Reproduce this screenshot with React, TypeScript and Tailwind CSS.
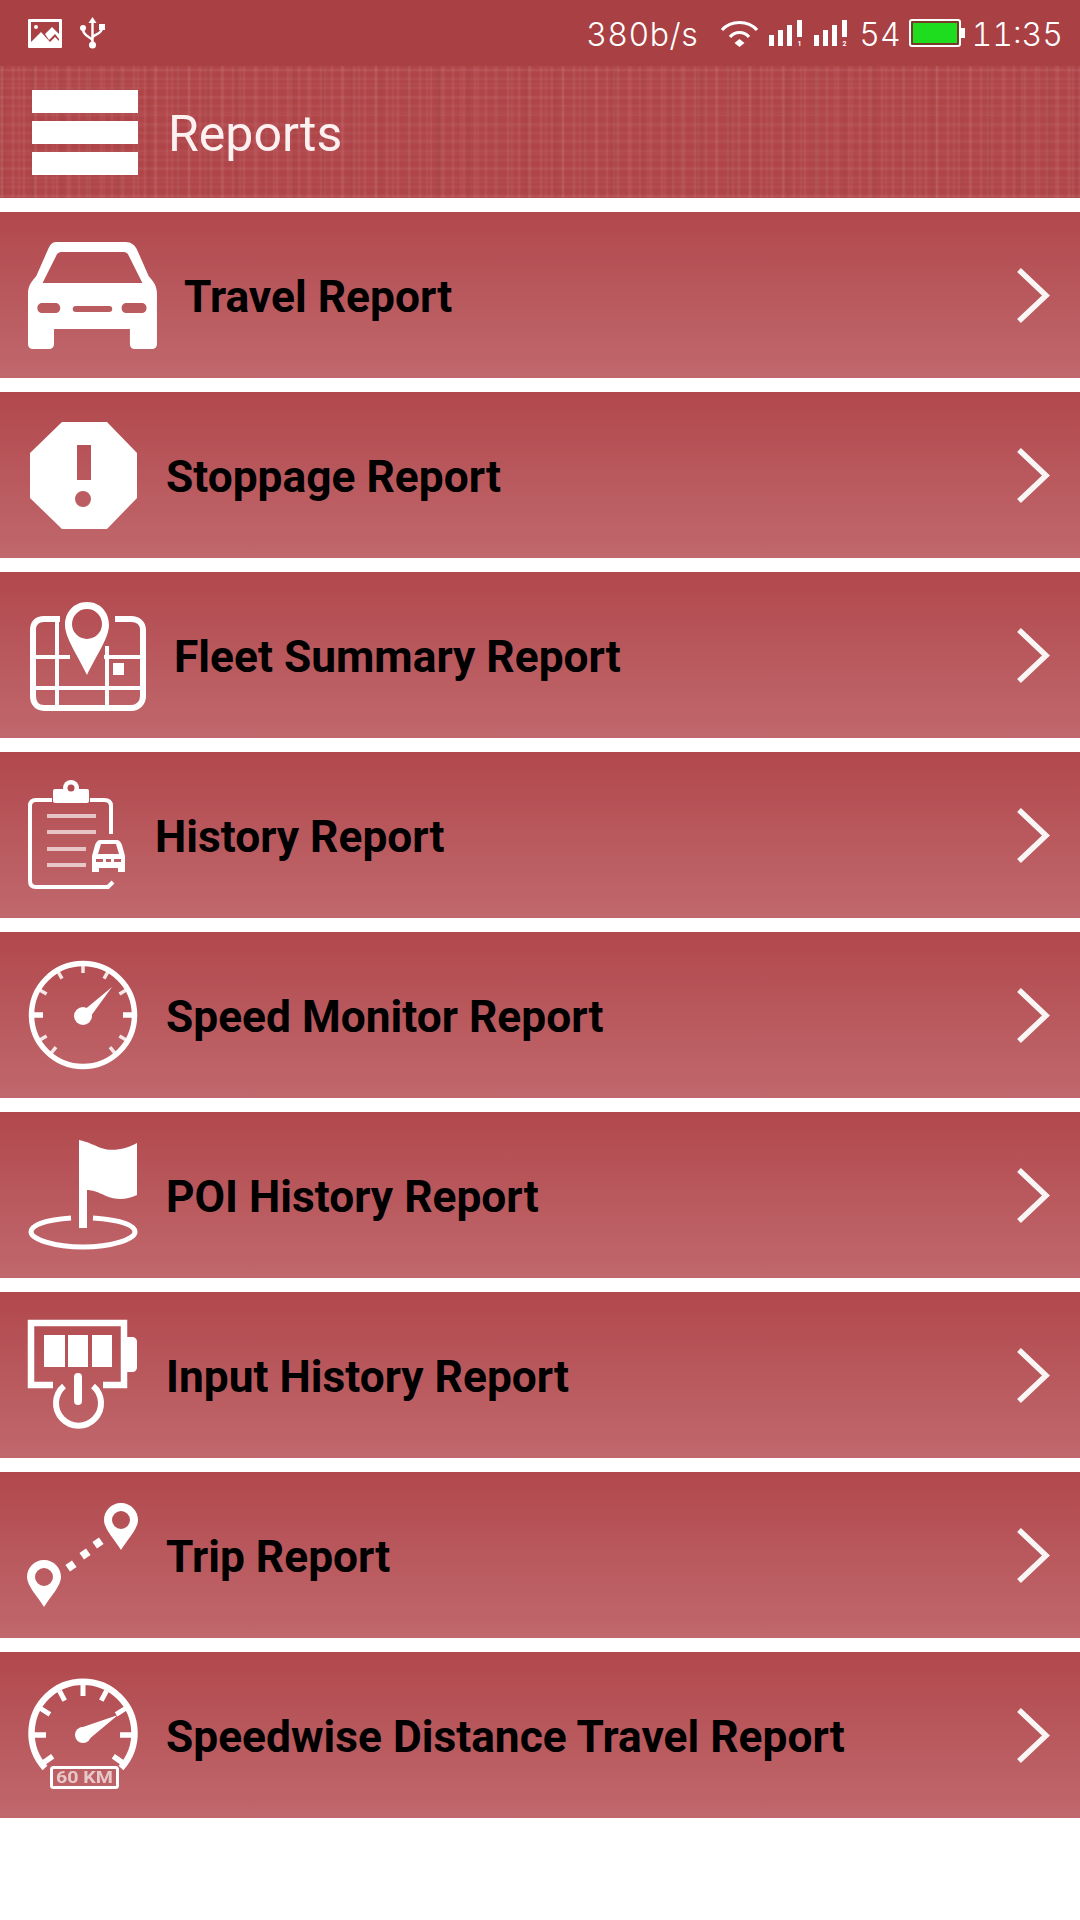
import React from 'react';

const Car = () => (
  <path
    transform="scale(1.04 1)"
    fillRule="evenodd"
    d="M27 2H94C99 2 103 5 105 10L116 36C121 42 124 46 124 54V104C124 107 122 109 119 109H103C100 109 98 107 98 104V89H25V104C25 107 23 109 20 109H5C2 109 0 107 0 104V54C0 46 3 42 8 36L19 10C21 5 23 2 27 2ZM32 12C30 12 28 13 27 16L14 43H110L97 16C96 13 94 12 92 12ZM14 63C11 63 9 65 9 68C9 71 11 73 14 73H26C29 73 31 71 31 68C31 65 29 63 26 63ZM46 66C44 66 43 67 43 69C43 71 44 72 46 72H78C80 72 81 71 81 69C81 67 80 66 78 66ZM95 63C92 63 90 65 90 68C90 71 92 73 95 73H109C112 73 114 71 114 68C114 65 112 63 109 63Z"
    fill="#fff"
  />
);

const Stop = () => (
  <path
    fillRule="evenodd"
    d="M34 2H79L109 33V78L79 109H34L2 78V33ZM49 25V60H63V25ZM55 71A8 8 0 1 0 55 87A8 8 0 1 0 55 71Z"
    fill="#fff"
  />
);

const FleetMap = () => (
  <g fill="none" stroke="#fff" strokeWidth="4">
    <path d="M32 19H16C9 19 5 23 5 30V96C5 103 9 108 16 108H103C110 108 115 103 115 96V30C115 23 110 19 103 19H87" strokeWidth="6" />
    <path d="M5 57H42M76 57H115M4 88H116M29 19V108M79 46V108" />
    <rect x="85" y="63" width="11" height="12" fill="#fff" stroke="none" />
    <path
      fillRule="evenodd"
      d="M59 2C45 2 37 13 37 25C37 38 50 56 59 75C68 56 81 38 81 25C81 13 73 2 59 2ZM59 9A15 15 0 1 1 59 39A15 15 0 1 1 59 9Z"
      fill="#fff"
      stroke="none"
    />
  </g>
);

const Clipboard = () => (
  <g fill="none" stroke="#fff">
    <path d="M24 20H8C4 20 2 22 2 26V101C2 105 4 107 8 107H80L85 102M62 20H76C81 20 83 22 83 26V54" strokeWidth="4" />
    <path d="M19 36H68M19 52H68M19 69H58M19 85H58" strokeWidth="4" opacity="0.65" />
    <rect x="25" y="9" width="36" height="14" rx="2" fill="#fff" stroke="none" />
    <circle cx="43" cy="8" r="8" fill="#fff" stroke="none" />
    <circle cx="43" cy="8" r="3.5" fill="#b24a4f" stroke="none" />
    <path
      fillRule="evenodd"
      d="M72 60H89C91 60 93 62 94 65L97 76V92H90V88H71V92H64V76L67 65C68 62 70 60 72 60ZM73 64L70 74H91L88 64ZM68 79V82H75V79ZM78 79V82H83V79ZM86 79V82H93V79Z"
      fill="#fff"
      stroke="none"
    />
  </g>
);

// tick marks round a gauge, angles in degrees clockwise from the top
const ticks = (cx: number, cy: number, r1: number, r2: number, angles: number[]) =>
  angles
    .map((a) => {
      const t = (a * Math.PI) / 180;
      const x1 = cx + Math.sin(t) * r1;
      const y1 = cy - Math.cos(t) * r1;
      const x2 = cx + Math.sin(t) * r2;
      const y2 = cy - Math.cos(t) * r2;
      return `M${x1.toFixed(1)} ${y1.toFixed(1)}L${x2.toFixed(1)} ${y2.toFixed(1)}`;
    })
    .join('');

const Gauge = () => (
  <g fill="none" stroke="#fff">
    <circle cx="55" cy="55" r="51.5" strokeWidth="5.5" />
    <path d={ticks(55, 55, 50, 40, [-90, 90])} strokeWidth="5.5" />
    <path d={ticks(55, 55, 50, 42, [0, -30, -60, 60, 30, -120, 120, -140, 140])} strokeWidth="3.5" opacity="0.85" />
    <circle cx="55" cy="56" r="9" fill="#fff" stroke="none" />
    <path d="M55 51L84 27L60 60Z" fill="#fff" stroke="none" />
  </g>
);

const Flag = () => (
  <g fill="#fff">
    <path d="M51 0C60 2 66 5 73 8C85 12 98 9 109 3V55C98 60 88 60 78 56C70 52 64 50 59 50V88H51Z" />
    <path d="M43 78C17 80 3 85 3 92C3 99 26 107 55 107C84 107 107 99 107 92C107 85 93 80 65 78" fill="none" stroke="#fff" strokeWidth="5" />
  </g>
);

const BatteryPower = () => (
  <g fill="none" stroke="#fff">
    <path d="M25 65H3V3H96V65H75" strokeWidth="6.5" />
    <path d="M99 17H104C107 17 109 19 109 22V47C109 50 107 52 104 52H99Z" fill="#fff" stroke="none" />
    <path d="M16 15H37V47H16ZM40 15H60V47H40ZM64 15H84V47H64Z" fill="#fff" stroke="none" />
    <path d="M36 66A22.5 22.5 0 1 0 65 66" strokeWidth="6" />
    <path d="M50 57V81" strokeWidth="8" strokeLinecap="round" />
  </g>
);

const pin = (x: number, y: number) =>
  `M${x} ${y}C${x - 10} ${y} ${x - 17} ${y + 8} ${x - 17} ${y + 17}C${x - 17} ${y + 26} ${x - 6} ${y + 37} ${x} ${y + 47}C${x + 6} ${y + 37} ${x + 17} ${y + 26} ${x + 17} ${y + 17}C${x + 17} ${y + 8} ${x + 10} ${y} ${x} ${y}ZM${x} ${y + 8}A9 9 0 1 0 ${x} ${y + 26}A9 9 0 1 0 ${x} ${y + 8}Z`;

const Trip = () => (
  <g fill="#fff">
    <path fillRule="evenodd" d={pin(93, 3)} />
    <path fillRule="evenodd" d={pin(16, 60)} />
    <rect x="39" y="62" width="8" height="8" transform="rotate(-35 43 66)" />
    <rect x="53" y="50" width="8" height="8" transform="rotate(-35 57 54)" />
    <rect x="66" y="39" width="8" height="8" transform="rotate(-35 70 43)" />
  </g>
);

const SpeedDistance = () => (
  <g fill="none" stroke="#fff">
    <path d="M17 88A51.5 51.5 0 1 1 93 88" strokeWidth="6.5" />
    <path d={ticks(55, 55, 50, 37, [-90, 90, -125, 125])} strokeWidth="5.5" />
    <path d={ticks(55, 55, 50, 39, [0, -28, 28, -58, 58])} strokeWidth="5" />
    <circle cx="55" cy="55" r="8" fill="#fff" stroke="none" />
    <path d="M52 48L90 35L60 60Z" fill="#fff" stroke="none" />
    <rect x="23.5" y="87.5" width="66" height="20" rx="2" strokeWidth="3" />
    <text x="28" y="103" textLength="57" lengthAdjust="spacingAndGlyphs" fontSize="17" fontWeight="700" fill="#fff" stroke="none" opacity="0.65" fontFamily="Roboto, sans-serif">
      60 KM
    </text>
  </g>
);

const reports = [
  { label: 'Travel Report', icon: <Car />, gap: 'ml-[31px]' },
  { label: 'Stoppage Report', icon: <Stop />, gap: 'ml-[13px]' },
  { label: 'Fleet Summary Report', icon: <FleetMap />, gap: 'ml-[21px]' },
  { label: 'History Report', icon: <Clipboard />, gap: 'ml-[2px]' },
  { label: 'Speed Monitor Report', icon: <Gauge />, gap: 'ml-[13px]' },
  { label: 'POI History Report', icon: <Flag />, gap: 'ml-[13px]' },
  { label: 'Input History Report', icon: <BatteryPower />, gap: 'ml-[13px]' },
  { label: 'Trip Report', icon: <Trip />, gap: 'ml-[13px]' },
  { label: 'Speedwise Distance Travel Report', icon: <SpeedDistance />, gap: 'ml-[13px]' },
];

const Signal = ({ sim }: { sim: string }) => (
  <svg width="34" height="27" viewBox="0 0 34 27" fill="#fff">
    <rect x="0" y="15" width="5" height="11" />
    <rect x="9" y="10" width="5" height="16" />
    <rect x="18" y="5" width="5" height="21" />
    <rect x="28" y="0" width="5" height="17" />
    <text x="30.5" y="26" textAnchor="middle" fontSize="7" fontWeight="700" fontFamily="Roboto, sans-serif">
      {sim}
    </text>
  </svg>
);

const StatusBar = () => (
  <div className="h-[66px] bg-[#a84044] flex items-center justify-between pl-[28px] pr-[17px] text-white text-[32px] tabular-nums font-['Inter',sans-serif] font-light">
    <div className="flex items-center gap-[18px]">
      <svg width="34" height="29" viewBox="0 0 34 29">
        <path
          fill="#fff"
          fillRule="evenodd"
          d="M1 0H33C34 0 34 1 34 1V28C34 29 33 29 33 29H1C0 29 0 28 0 28V1C0 0 1 0 1 0ZM3 3V23L13 13L22 23L27 18L31 22V3ZM8 6A2 2 0 1 0 8 10A2 2 0 1 0 8 6Z"
        />
        <path fill="#fff" d="M17 15L24 8L31 15V20L27 15L21 21Z" />
      </svg>
      <svg width="25" height="32" viewBox="0 0 25 32" fill="none" stroke="#fff" strokeWidth="2.4">
        <path d="M12.5 4V27M12.5 24C12.5 20 3 20 3 12M12.5 21C12.5 17 22 18 22 11" />
        <circle cx="12.5" cy="28" r="3.5" fill="#fff" stroke="none" />
        <path d="M12.5 0L16.5 6H8.5Z" fill="#fff" stroke="none" />
        <circle cx="3" cy="11" r="3" fill="#fff" stroke="none" />
        <rect x="19" y="7" width="6" height="6" fill="#fff" stroke="none" />
      </svg>
    </div>
    <div className="flex items-center">
      <span className="mr-[22px] pt-[3px] tracking-[0.5px]">380b/s</span>
      <svg className="mr-[10px]" width="39" height="28" viewBox="0 0 39 28" fill="none" stroke="#fff" strokeWidth="3.2">
        <path d="M2 11C11 1 28 1 37 11" />
        <path d="M10 18C15 12 24 12 29 18" />
        <path d="M14.5 24L19.5 20L24.5 24L19.5 28Z" fill="#fff" stroke="none" />
      </svg>
      <div className="mr-[11px]">
        <Signal sim="1" />
      </div>
      <div className="mr-[11px]">
        <Signal sim="2" />
      </div>
      <span className="mr-[8px] pt-[3px]">54</span>
      <svg className="mr-[7px]" width="56" height="28" viewBox="0 0 56 28">
        <rect x="1" y="1" width="50" height="26" rx="2" fill="#7a3a2a" stroke="#fff" strokeWidth="2" />
        <rect x="4" y="4" width="44" height="20" fill="#1edc1e" />
        <rect x="52" y="9" width="4" height="10" fill="#fff" />
      </svg>
      <span className="pt-[3px]">11:35</span>
    </div>
  </div>
);

const Header = () => (
  <div className="h-[132px] flex items-center pl-[32px] text-[#fdf0f0] bg-[#b04549] [background-image:repeating-linear-gradient(90deg,transparent_0px,rgba(255,255,255,0.07)_2px,transparent_4px,transparent_11px),repeating-linear-gradient(90deg,transparent_0px,rgba(255,255,255,0.05)_2px,transparent_4px,transparent_17px),repeating-linear-gradient(90deg,transparent_0px,rgba(0,0,0,0.03)_4px,transparent_8px,transparent_29px),repeating-linear-gradient(0deg,transparent_0px,rgba(255,255,255,0.055)_2px,transparent_4px,transparent_9px),repeating-linear-gradient(0deg,transparent_0px,rgba(255,255,255,0.04)_2px,transparent_4px,transparent_14px)]">
    <div className="flex flex-col gap-[8px] w-[106px] blur-[0.5px]">
      <div className="h-[23px] bg-white" />
      <div className="h-[23px] bg-white" />
      <div className="h-[23px] bg-white" />
    </div>
    <span className="ml-[30px] pt-[4px] text-[50px] font-['Roboto',sans-serif]">Reports</span>
  </div>
);

const Row = ({ label, icon, gap }: { label: string; icon: React.ReactNode; gap: string }) => (
  <div className="h-[166px] flex items-center pl-[28px] pr-[30px] bg-gradient-to-b from-[#b1484d] to-[#c0686d]">
    <svg className="shrink-0 overflow-visible blur-[0.5px]" width="125" height="110" viewBox="0 0 125 110">
      {icon}
    </svg>
    <span className={`${gap} flex-1 pt-[4px] text-[44.3px] font-bold text-black font-['Roboto',sans-serif]`}>{label}</span>
    <svg className="blur-[0.5px]" width="33" height="55" viewBox="0 0 33 55" fill="none" stroke="#fff" strokeWidth="5.5" opacity="0.95">
      <path d="M2 2L29 27.5L2 53" />
    </svg>
  </div>
);

export default function App() {
  return (
    <div className="w-[1080px] h-[1920px] bg-white">
      <StatusBar />
      <Header />
      <div className="flex flex-col gap-[14px] pt-[14px]">
        {reports.map((r) => (
          <Row key={r.label} label={r.label} icon={r.icon} gap={r.gap} />
        ))}
      </div>
    </div>
  );
}
